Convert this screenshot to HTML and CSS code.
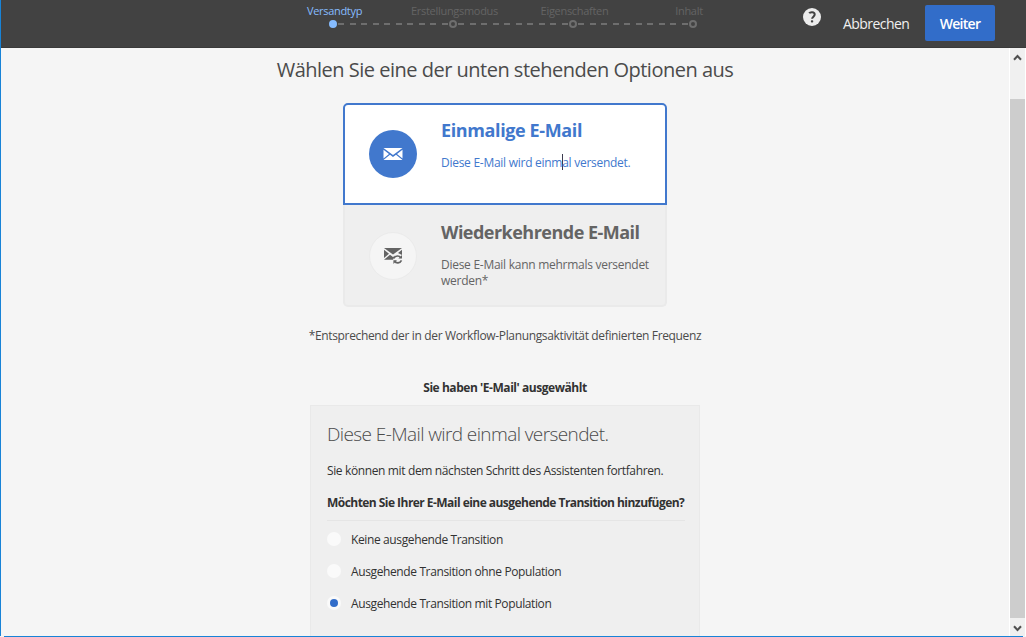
FILE: index.html
```html
<!DOCTYPE html>
<html lang="de">
<head>
<meta charset="utf-8">
<title>Versandtyp</title>
<link rel="stylesheet" href="styles.css">
</head>
<body>
<div class="window">
  <header class="topbar">
    <ol class="steps">
      <li class="step active"><span class="t step-label">Versandtyp</span><span class="dot"></span></li>
      <li class="step"><span class="t step-label">Erstellungsmodus</span><span class="dot"></span></li>
      <li class="step"><span class="t step-label">Eigenschaften</span><span class="dot"></span></li>
      <li class="step last"><span class="t step-label">Inhalt</span><span class="dot"></span></li>
    </ol>
    <div class="actions">
      <svg class="help" width="18" height="18" viewBox="0 0 18 18"><circle cx="9" cy="9" r="9" fill="#ececec"/><path d="M6.2 5.3C7 4 11.6 3.5 11.7 6.5c0 2-2.6 2.3-2.6 4.3" fill="none" stroke="#424242" stroke-width="2"/><rect x="7.9" y="12.3" width="2.3" height="2.3" rx=".8" fill="#424242"/></svg>
      <a class="cancel"><span class="t">Abbrechen</span></a>
      <button class="next"><span class="t">Weiter</span></button>
    </div>
  </header>
  <div class="body">
    <main class="content">
      <h1 class="title"><span class="t">Wählen Sie eine der unten stehenden Optionen aus</span></h1>
      <div class="cards">
        <section class="card selected">
          <div class="badge"><svg width="20" height="14" viewBox="0 0 20 14"><path d="M0.5 1h19L10 8z M0.5 2.7L6 7 .5 11.5z M19.5 2.7L14 7l5.500 4.500z M.5 13L7 7.700 10 10l3-2.300L19.500 13z" fill="#fff"/></svg></div>
          <div class="card-text">
            <h2 class="card-title"><span class="t">Einmalige E-Mail</span></h2>
            <p class="card-desc"><span class="t">Diese E-Mail wird einm<i class="caret"></i>al versendet.</span></p>
          </div>
        </section>
        <section class="card">
          <div class="badge"><svg width="20" height="18" viewBox="0 0 20 18"><path d="M1 1h18L10 7.500z M1 2.700L6 6.800 1 11z M19 2.700L15 6l4 2z M1 12.800L7 7.700 10 10l2-1.400-2 4.200z" fill="#646464"/><path d="M10.800 11.300c1.500-3 5.500-3 7-.5M18.500 13.300c-1.500 3.300-5.500 3.300-7 .7" fill="none" stroke="#646464" stroke-width="1.600"/><path d="M19 8v3.600h-3.600zM10.400 17v-3.700H14z" fill="#646464"/></svg></div>
          <div class="card-text">
            <h2 class="card-title"><span class="t">Wiederkehrende E-Mail</span></h2>
            <p class="card-desc"><span class="t">Diese E-Mail kann mehrmals versendet</span><br><span class="t">werden*</span></p>
          </div>
        </section>
      </div>
      <p class="note"><span class="t">*Entsprechend der in der Workflow-Planungsaktivität definierten Frequenz</span></p>
      <p class="chosen"><span class="t">Sie haben 'E-Mail' ausgewählt</span></p>
      <section class="panel">
        <h3 class="panel-title"><span class="t">Diese E-Mail wird einmal versendet.</span></h3>
        <p class="panel-line"><span class="t">Sie können mit dem nächsten Schritt des Assistenten fortfahren.</span></p>
        <p class="question"><span class="t">Möchten Sie Ihrer E-Mail eine ausgehende Transition hinzufügen?</span></p>
        <div class="option"><span class="radio"></span><span class="t">Keine ausgehende Transition</span></div>
        <div class="option"><span class="radio"></span><span class="t">Ausgehende Transition ohne Population</span></div>
        <div class="option"><span class="radio on"></span><span class="t">Ausgehende Transition mit Population</span></div>
      </section>
    </main>
    <aside class="scrollbar">
      <svg class="arrow" width="9" height="7" viewBox="0 0 9 7"><path d="M1 5.800L4.500 2 8 5.800" fill="none" stroke="#505050" stroke-width="2"/></svg>
      <div class="thumb"></div>
      <svg class="arrow" width="9" height="7" viewBox="0 0 9 7"><path d="M1 1.200L4.500 5 8 1.200" fill="none" stroke="#505050" stroke-width="2"/></svg>
    </aside>
  </div>
  <div class="edge"></div>
</div>
</body>
</html>
```
FILE: styles.css
```css
* { box-sizing: border-box; margin: 0; padding: 0; }
body { width: 1026px; height: 637px; overflow: hidden; background: #f5f5f5; font-family: "Open Sans", "Noto Sans", sans-serif; font-size: 12px; color: #323232; }
.t { white-space: nowrap; }
.window { display: flex; flex-direction: column; width: 1026px; height: 637px; }
.topbar { display: flex; justify-content: space-between; height: 48px; flex: none; background: linear-gradient(#424242 47px, #3a3a3a 47px); border-left: 1px solid #1883d7; }
.steps { display: flex; list-style: none; margin-left: 272px; }
.step { position: relative; display: flex; flex-direction: column; align-items: center; width: 120px; height: 40px; font-size: 11px; letter-spacing: -.3px; line-height: 16px; padding-top: 3px; color: #646464; }
.step .step-label { height: 16px; margin-left: 3px; }
.step.last .step-label { margin-left: -8px; }
.dot { width: 8px; height: 8px; border: 2px solid #6e6e6e; border-radius: 50%; margin-top: 1px; }
.active { color: #86bcff; }
.active .dot { background: #86bcff; border-color: #86bcff; }
.step:not(.last)::after { content: ""; position: absolute; left: 65px; top: 23px; width: 110px; height: 2px; background: repeating-linear-gradient(90deg, #6e6e6e 0 6px, transparent 6px 11.550px); }
.actions { display: flex; padding-right: 31px; }
.help { margin-top: 8px; }
.cancel { width: 66px; margin: 0 16px 0 22px; line-height: 48px; font-size: 14px; letter-spacing: -.55px; color: #f0f0f0; }
.next { width: 70px; height: 36px; margin-top: 5px; border: 0; border-radius: 2px; background: #326dc9; color: #fff; font: 600 14px "Open Sans", sans-serif; letter-spacing: -.7px; }
.body { display: flex; height: 588px; }
.content { display: flex; flex-direction: column; align-items: center; flex: 1; height: 588px; overflow: hidden; border-left: 1px solid #1883d7; }
.content > * { flex: none; }
.title { margin-top: 6px; height: 49px; line-height: 32px; font-size: 20px; letter-spacing: -.5px; font-weight: 400; color: #4b4b4b; }
.cards { width: 324px; }
.card { display: flex; height: 102px; border: 2px solid #eaeaea; border-top: 0; background: #efefef; border-radius: 0 0 5px 5px; color: #646464; }
.card.selected { border: 2px solid #4178cd; background: #fff; border-radius: 5px 5px 0 0; color: #4178cd; }
.badge { display: flex; align-items: center; justify-content: center; flex: none; width: 48px; height: 48px; margin: 27px 24px 0; border-radius: 50%; background: #f5f5f5; border: 1px solid #ebebeb; }
.selected .badge { margin-top: 25px; background: #4178cd; border: 0; }
.card-title { margin-top: 13px; height: 28px; line-height: 28px; font-size: 18px; letter-spacing: -.52px; font-weight: 700; }
.selected .card-title { margin-top: 11px; letter-spacing: -.38px; }
.card-desc { margin-top: 11px; line-height: 16px; letter-spacing: -.27px; }
.selected .card-desc { margin-top: 10px; }
.caret { display: inline-block; width: 1px; height: 16px; margin-right: -1px; background: #3c3c50; vertical-align: -3px; }
.note { margin-top: 19px; line-height: 20px; letter-spacing: -.35px; color: #4b4b4b; }
.chosen { margin-top: 32px; line-height: 20px; letter-spacing: -.45px; font-weight: 700; }
.panel { width: 390px; height: 260px; margin-top: 7px; padding: 0 14px 0 16px; border: 1px solid #e9e9e9; background: #efefef; }
.panel-title { margin-top: 13px; height: 31px; line-height: 30px; font-size: 19px; letter-spacing: -.6px; font-weight: 300; color: #4b4b4b; }
.panel-line { margin-top: 11px; line-height: 20px; letter-spacing: -.37px; }
.question { margin-top: 12px; height: 28px; line-height: 20px; letter-spacing: -.54px; font-weight: 700; border-bottom: 1px solid #e5e5e5; }
.option { display: flex; align-items: center; height: 32px; gap: 9px; letter-spacing: -.38px; }
.question + .option { margin-top: 2px; }
.radio { display: flex; align-items: center; justify-content: center; width: 14px; height: 14px; margin-right: 1px; border-radius: 50%; background: #fafafa; }
.on::after { content: ""; width: 8px; height: 8px; border-radius: 50%; background: #326dc9; }
.scrollbar { display: flex; flex-direction: column; align-items: center; justify-content: space-between; width: 17px; border-left: 1px solid #fff; border-right: 1px solid #fff; background: #f0f0f0; padding: 6px 0 4px; }
.thumb { width: 15px; height: 519px; margin-top: 38px; margin-bottom: 7px; background: #cdcdcd; }
.arrow { flex: none; }
.edge { height: 1px; margin: 0 3px 0 4px; background: #1883d7; }
```
